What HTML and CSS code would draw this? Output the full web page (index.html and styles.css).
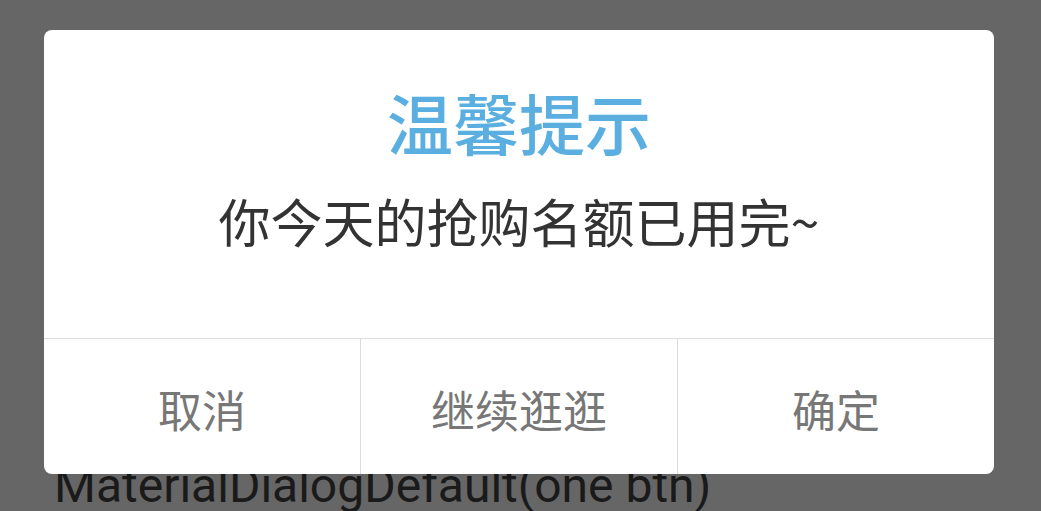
FILE: index.html
```html
<!DOCTYPE html>
<html lang="zh">
<head>
<meta charset="utf-8">
<link rel="stylesheet" href="styles.css">
</head>
<body>
<div class="page">
  <div class="page-text">MaterialDialogDefault(one btn)</div>
</div>
<div class="overlay">
  <div class="dialog">
    <div class="dialog-body">
      <div class="dialog-title">温馨提示</div>
      <div class="dialog-msg">你今天的抢购名额已用完~</div>
    </div>
    <div class="dialog-actions">
      <div class="btn">取消</div>
      <div class="btn">继续逛逛</div>
      <div class="btn">确定</div>
    </div>
  </div>
</div>
</body>
</html>
```
FILE: styles.css
```css
html, body {
  margin: 0;
  padding: 0;
  width: 1041px;
  height: 511px;
  overflow: hidden;
  background: #666666;
}
.page {
  padding-top: 458px;
  padding-left: 54px;
}
.page-text {
  font-family: Roboto, "Liberation Sans", sans-serif;
  font-size: 48px;
  line-height: 56px;
  color: #1a1a1a;
  white-space: nowrap;
}
.overlay {
  position: absolute;
  left: 44px;
  top: 30px;
}
.dialog {
  width: 950px;
  height: 444px;
  background: #ffffff;
  border-radius: 8px;
  display: flex;
  flex-direction: column;
  overflow: hidden;
  font-family: "Noto Sans CJK SC", "Noto Sans", sans-serif;
}
.dialog-body {
  height: 308px;
  display: flex;
  flex-direction: column;
  align-items: center;
  padding-top: 51px;
  box-sizing: border-box;
}
.dialog-title {
  font-size: 66px;
  line-height: 80px;
  font-weight: 500;
  color: #5aafe0;
}
.dialog-msg {
  margin-top: 28px;
  font-size: 52px;
  line-height: 64px;
  color: #333333;
}
.dialog-actions {
  flex: 1;
  display: flex;
  border-top: 1px solid #dddddd;
}
.btn {
  flex: 1;
  display: flex;
  align-items: center;
  justify-content: center;
  font-size: 44px;
  color: #777777;
  padding-top: 4px;
}
.btn + .btn {
  border-left: 1px solid #dddddd;
}
```
